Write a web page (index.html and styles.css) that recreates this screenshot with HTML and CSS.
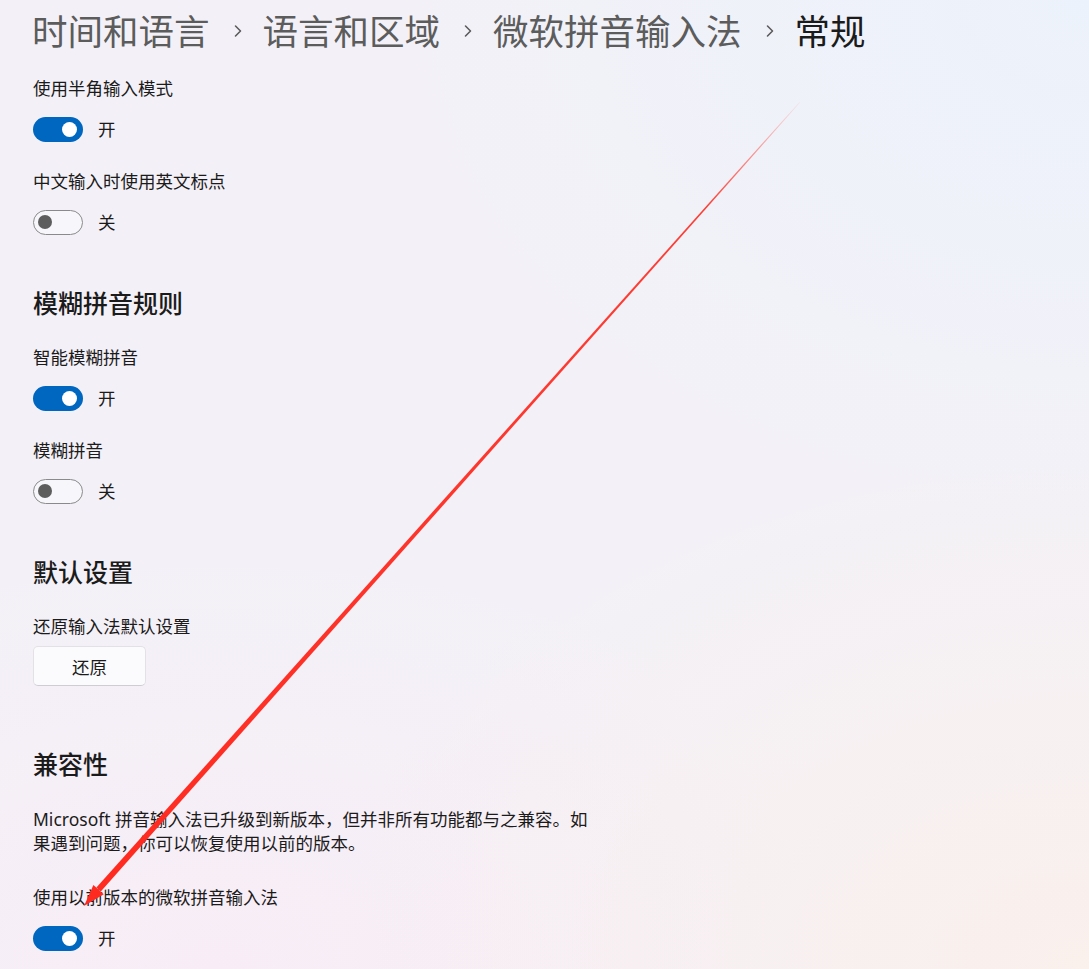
FILE: index.html
```html
<!DOCTYPE html>
<html lang="zh-CN">
<head>
<meta charset="utf-8">
<title>常规</title>
<link rel="stylesheet" href="styles.css">
</head>
<body>
<div class="page">
  <nav class="crumbs">
    <span class="crumb">时间和语言</span>
    <svg class="chev" viewBox="0 0 10 14" width="10" height="14"><path d="M2.5 2 L7.5 7 L2.5 12" fill="none" stroke="#5c5c5c" stroke-width="1.6" stroke-linecap="round" stroke-linejoin="round"/></svg>
    <span class="crumb">语言和区域</span>
    <svg class="chev" viewBox="0 0 10 14" width="10" height="14"><path d="M2.5 2 L7.5 7 L2.5 12" fill="none" stroke="#5c5c5c" stroke-width="1.6" stroke-linecap="round" stroke-linejoin="round"/></svg>
    <span class="crumb">微软拼音输入法</span>
    <svg class="chev" viewBox="0 0 10 14" width="10" height="14"><path d="M2.5 2 L7.5 7 L2.5 12" fill="none" stroke="#5c5c5c" stroke-width="1.6" stroke-linecap="round" stroke-linejoin="round"/></svg>
    <span class="crumb current">常规</span>
  </nav>

  <section class="group first">
    <div class="label">使用半角输入模式</div>
    <div class="toggle-row"><span class="toggle on"><span class="knob"></span></span><span class="state">开</span></div>
    <div class="label">中文输入时使用英文标点</div>
    <div class="toggle-row"><span class="toggle off"><span class="knob"></span></span><span class="state">关</span></div>
  </section>

  <section class="group">
    <h2 class="heading">模糊拼音规则</h2>
    <div class="label">智能模糊拼音</div>
    <div class="toggle-row"><span class="toggle on"><span class="knob"></span></span><span class="state">开</span></div>
    <div class="label">模糊拼音</div>
    <div class="toggle-row"><span class="toggle off"><span class="knob"></span></span><span class="state">关</span></div>
  </section>

  <section class="group">
    <h2 class="heading">默认设置</h2>
    <div class="label">还原输入法默认设置</div>
    <button class="btn">还原</button>
  </section>

  <section class="group compat">
    <h2 class="heading">兼容性</h2>
    <p class="desc">Microsoft 拼音输入法已升级到新版本，但并非所有功能都与之兼容。如果遇到问题，你可以恢复使用以前的版本。</p>
    <div class="label spaced">使用以前版本的微软拼音输入法</div>
    <div class="toggle-row"><span class="toggle on"><span class="knob"></span></span><span class="state">开</span></div>
  </section>
</div>

<svg class="annot" viewBox="0 0 1089 969" width="1089" height="969">
  <defs>
    <linearGradient id="fade" gradientUnits="userSpaceOnUse" x1="800" y1="102" x2="84" y2="906">
      <stop offset="0" stop-color="#ff2a1f" stop-opacity="0.05"/>
      <stop offset="0.13" stop-color="#ff2a1f" stop-opacity="0.9"/>
      <stop offset="1" stop-color="#ff2a1f" stop-opacity="1"/>
    </linearGradient>
  </defs>
  <polygon points="800.3,102.3 799.7,101.7 96.4,887.6 100.8,891.6" fill="url(#fade)"/>
  <polygon points="84,906 93.4,884.9 103.8,894.3" fill="#ff2a1f"/>
</svg>
</body>
</html>
```
FILE: styles.css
```css
html, body {
  margin: 0;
  padding: 0;
}
body {
  width: 1089px;
  min-height: 969px;
  position: relative;
  overflow: hidden;
  font-family: "Noto Sans", "Noto Sans CJK SC", sans-serif;
  color: #1b1b1b;
  background:
    radial-gradient(ellipse 700px 520px at 100% 0%, rgba(236, 242, 251, 1) 0%, rgba(236, 242, 251, 0) 100%),
    radial-gradient(ellipse 760px 520px at 100% 100%, rgba(250, 240, 236, 1) 0%, rgba(250, 240, 236, 0) 100%),
    radial-gradient(ellipse 700px 420px at 20% 100%, rgba(248, 237, 246, 1) 0%, rgba(248, 237, 246, 0) 100%),
    #f3f1f7;
}
.page {
  padding: 8px 0 0 33px;
  display: flex;
  flex-direction: column;
}
.crumbs {
  display: flex;
  align-items: center;
  height: 44px;
  font-family: "Noto Sans CJK SC", sans-serif;
  font-size: 35.5px;
  line-height: 44px;
  color: #5c5c5c;
  margin-left: -1px;
}
.chev {
  margin: 2px 20px 0 23px;
  flex: none;
}
.crumb.current {
  color: #1b1b1b;
}
.group {
  display: flex;
  flex-direction: column;
  align-items: flex-start;
  margin-top: 50px;
}
.group.first {
  margin-top: 24px;
}
.heading {
  margin: 0 0 26px 0;
  font-family: "Noto Sans CJK SC", sans-serif;
  font-size: 25px;
  line-height: 34px;
  height: 34px;
  font-weight: 500;
  color: #1b1b1b;
}
.label {
  font-size: 17.5px;
  line-height: 24px;
  height: 24px;
  color: #1b1b1b;
  white-space: nowrap;
}
.label.spaced {
  margin-top: 30px;
}
.toggle-row {
  display: flex;
  align-items: center;
  height: 26px;
  margin: 16px 0 27px 0;
}
.group .toggle-row:last-child {
  margin-bottom: 0;
}
.toggle {
  box-sizing: border-box;
  width: 50px;
  height: 25px;
  border-radius: 12.5px;
  display: flex;
  align-items: center;
  flex: none;
}
.toggle.on {
  background: #0067c0;
  justify-content: flex-end;
  padding-right: 6px;
}
.toggle.off {
  background: rgba(255, 255, 255, 0.35);
  border: 1.3px solid #8a8a8a;
  justify-content: flex-start;
  padding-left: 4px;
}
.knob {
  width: 15px;
  height: 15px;
  border-radius: 50%;
}
.toggle.on .knob {
  background: #ffffff;
}
.toggle.off .knob {
  background: #5d5d5d;
  width: 14px;
  height: 14px;
}
.state {
  margin-left: 15px;
  font-size: 17.5px;
  line-height: 24px;
  color: #1b1b1b;
}
.btn {
  margin-top: 8px;
  width: 113px;
  height: 40px;
  box-sizing: border-box;
  border: 1px solid #e3e1e6;
  border-bottom-color: #cfcdd2;
  border-radius: 5px;
  background: #fbfafd;
  font-family: "Noto Sans", "Noto Sans CJK SC", sans-serif;
  font-size: 17.5px;
  color: #1b1b1b;
  padding: 0;
}
.group.compat {
  margin-top: 60px;
}
.desc {
  margin: 1px 0 0 0;
  width: 560px;
  font-size: 17.5px;
  line-height: 24px;
  color: #1b1b1b;
}
.annot {
  position: absolute;
  left: 0;
  top: 0;
  pointer-events: none;
}
```
